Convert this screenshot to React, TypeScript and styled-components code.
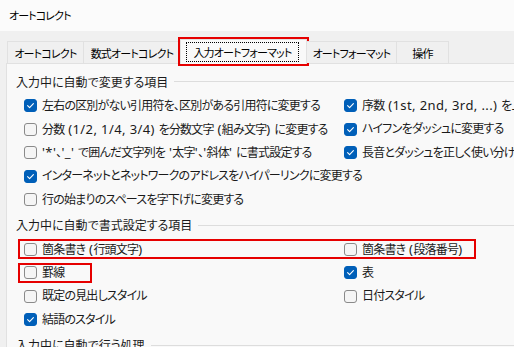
import React from 'react';
import styled, { createGlobalStyle } from 'styled-components';

const GlobalStyle = createGlobalStyle`
  * { box-sizing: border-box; }
  body {
    margin: 0;
    background: #f0f0f0;
    overflow: hidden;
    font-family: "Noto Sans", "Noto Sans CJK JP", sans-serif;
    font-feature-settings: "palt";
    font-size: 12px;
    letter-spacing: -0.8px;
    color: #1a1a1a;
  }
`;

const Window = styled.div`
  width: 514px;
  height: 347px;
  display: flex;
  flex-direction: column;
  overflow: hidden;
`;

const TitleBar = styled.div`
  height: 31px;
  flex: none;
  display: flex;
  align-items: center;
  padding: 0 0 1px 9px;
  background: #fbfbfb;
  font-size: 11px;
  letter-spacing: -0.9px;
  color: #000;
`;

const Body = styled.div`
  flex: 1;
  display: flex;
  flex-direction: column;
  padding: 10px 0 0 6px;
  min-height: 0;
`;

const TabStrip = styled.div`
  display: flex;
  align-items: flex-end;
  height: 22px;
  padding-left: 1px;
  position: relative;
  z-index: 1;
`;

const Tab = styled.div<{ $w: number; $active?: boolean }>`
  width: ${p => p.$w}px;
  height: ${p => (p.$active ? 25 : 22)}px;
  margin-left: -1px;
  margin-bottom: ${p => (p.$active ? -1 : 0)}px;
  display: flex;
  align-items: center;
  justify-content: center;
  border: 1px solid #e1e1e1;
  border-bottom: none;
  background: ${p => (p.$active ? '#f9f9f9' : '#f0f0f0')};
  white-space: nowrap;
  font-size: 11px;
  letter-spacing: -0.8px;
  color: #000;
  &:first-child { margin-left: 0; }
  ${p => p.$active && `
    outline: 2px solid #e60000;
    outline-offset: 0px;
    align-items: stretch;
    justify-content: stretch;
  `}
`;

const FocusLabel = styled.span`
  flex: 1;
  display: flex;
  align-items: center;
  justify-content: center;
  margin: 2px 7px 2px 5px;
  border: 1px dotted #000;
`;

const Panel = styled.div`
  flex: 1;
  background: #f9f9f9;
  border-top: 1px solid #e1e1e1;
  border-left: 1px solid #e1e1e1;
  padding: 6px 0 0 9px;
`;

const Section = styled.section`
  & + & { margin-top: 2px; }
`;

const Heading = styled.div`
  height: 23px;
  margin-bottom: 1px;
  display: flex;
  align-items: center;
  white-space: nowrap;
  letter-spacing: 0;
  color: #1a1a1a;
  &::after {
    content: '';
    flex: 1;
    height: 1px;
    margin-left: 6px;
    background: #dddddd;
  }
`;

const Row = styled.div`
  height: 23.5px;
  display: flex;
  align-items: center;
  padding-left: 8px;
  white-space: nowrap;
`;

const Mark = styled.div<{ $w: number }>`
  width: ${p => p.$w}px;
  height: 20px;
  margin-left: -6px;
  padding-left: 4px;
  border: 2px solid #e60000;
  display: flex;
  align-items: center;
  flex: none;
`;

const Cell = styled.div<{ $w?: number }>`
  ${p => (p.$w ? `width: ${p.$w}px;` : '')}
  flex: none;
  display: flex;
  align-items: center;
  gap: 5px;
`;

const Box = styled.span<{ $on?: boolean }>`
  width: 13px;
  height: 13px;
  flex: none;
  border-radius: 3px;
  display: inline-flex;
  align-items: center;
  justify-content: center;
  background: ${p => (p.$on ? '#005fb8' : '#f5f5f5')};
  border: 1px solid ${p => (p.$on ? '#005fb8' : '#8a8a8a')};
`;

const Label = styled.span`
  line-height: 16px;
  white-space: pre;
`;

// Latin runs are a little wider than the tightened kana/kanji
const L = styled.span`
  font-size: 13px;
  letter-spacing: 0.4px;
`;

function Check({ on, children, w }: { on?: boolean; children: React.ReactNode; w?: number }) {
  return (
    <Cell $w={w}>
      <Box $on={on}>
        {on && (
          <svg width="11" height="11" viewBox="0 0 11 11">
            <path d="M2.6 5.7 L4.6 7.6 L8.4 3.6" fill="none" stroke="#fff" strokeWidth="1.1" strokeLinecap="round" strokeLinejoin="round" />
          </svg>
        )}
      </Box>
      <Label>{children}</Label>
    </Cell>
  );
}

const LEFT = 320;

export default function App() {
  return (
    <Window>
      <GlobalStyle />
      <TitleBar>オートコレクト</TitleBar>
      <Body>
        <TabStrip>
          <Tab $w={77}>オートコレクト</Tab>
          <Tab $w={98}>数式オートコレクト</Tab>
          <Tab $w={127} $active>
            <FocusLabel>入力オートフォーマット</FocusLabel>
          </Tab>
          <Tab $w={91}>オートフォーマット</Tab>
          <Tab $w={53}>操作</Tab>
        </TabStrip>
        <Panel>
          <Section>
            <Heading>入力中に自動で変更する項目</Heading>
            <Row>
              <Check on w={LEFT}>左右の区別がない引用符を、区別がある引用符に変更する</Check>
              <Check on>序数<L> (1st, 2nd, 3rd, ...) </L>を上付き文字に変更する</Check>
            </Row>
            <Row>
              <Check w={LEFT}>分数<L> (1/2, 1/4, 3/4) </L>を分数文字<L> (</L>組み文字<L>) </L>に変更する</Check>
              <Check on>ハイフンをダッシュに変更する</Check>
            </Row>
            <Row>
              <Check w={LEFT}><L>'*'</L>、<L>'_' </L>で囲んだ文字列を<L> '</L>太字<L>'</L>、<L>'</L>斜体<L>' </L>に書式設定する</Check>
              <Check on>長音とダッシュを正しく使い分ける</Check>
            </Row>
            <Row>
              <Check on>インターネットとネットワークのアドレスをハイパーリンクに変更する</Check>
            </Row>
            <Row>
              <Check>行の始まりのスペースを字下げに変更する</Check>
            </Row>
          </Section>
          <Section>
            <Heading>入力中に自動で書式設定する項目</Heading>
            <Row>
              <Mark $w={458}>
                <Check w={LEFT}>箇条書き<L> (</L>行頭文字<L>)</L></Check>
                <Check>箇条書き<L> (</L>段落番号<L>)</L></Check>
              </Mark>
            </Row>
            <Row>
              <Mark $w={74}>
                <Check>罫線</Check>
              </Mark>
              <Cell $w={LEFT - 74 + 6} />
              <Check on>表</Check>
            </Row>
            <Row>
              <Check w={LEFT}>既定の見出しスタイル</Check>
              <Check>日付スタイル</Check>
            </Row>
            <Row>
              <Check on>結語のスタイル</Check>
            </Row>
          </Section>
          <Section>
            <Heading>入力中に自動で行う処理</Heading>
          </Section>
        </Panel>
      </Body>
    </Window>
  );
}
